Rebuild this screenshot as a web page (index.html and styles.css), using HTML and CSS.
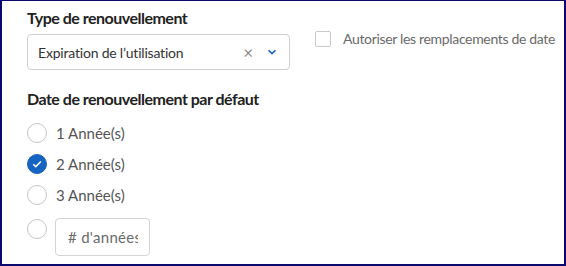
FILE: index.html
```html
<!DOCTYPE html>
<html lang="fr">
<head>
    <meta charset="UTF-8">
    <title>Renouvellement</title>
    <link rel="stylesheet" href="styles.css">
</head>
<body>
    <div class="frame">
        <div class="top-row">
            <div class="field">
                <label class="field-label">Type de renouvellement</label>
                <div class="select">
                    <span class="select-value">Expiration de l’utilisation</span>
                    <span class="select-clear">&times;</span>
                    <svg class="select-arrow" width="10" height="6" viewBox="0 0 10 6">
                        <path d="M1.5 1.2 L5 4.6 L8.5 1.2" fill="none" stroke="#1565c0" stroke-width="1.6"/>
                    </svg>
                </div>
            </div>
            <label class="checkbox">
                <span class="checkbox-box"></span>
                <span class="checkbox-text">Autoriser les remplacements de date</span>
            </label>
        </div>

        <div class="field">
            <div class="field-label">Date de renouvellement par défaut</div>
            <div class="radio-list">
                <label class="radio">
                    <span class="radio-dot"></span>
                    <span>1 Année(s)</span>
                </label>
                <label class="radio checked">
                    <span class="radio-dot">
                        <svg width="10" height="8" viewBox="0 0 10 8">
                            <path d="M1.2 4.2 L3.8 6.6 L8.8 1.4" fill="none" stroke="#fff" stroke-width="1.5"/>
                        </svg>
                    </span>
                    <span>2 Année(s)</span>
                </label>
                <label class="radio">
                    <span class="radio-dot"></span>
                    <span>3 Année(s)</span>
                </label>
                <div class="radio custom">
                    <span class="radio-dot"></span>
                    <input class="years-input" type="text" placeholder="# d'années">
                </div>
            </div>
        </div>
    </div>
</body>
</html>
```

FILE: styles.css
```css
* {
    margin: 0;
    padding: 0;
    box-sizing: border-box;
}
body {
    font-family: 'Lato', sans-serif;
    background-color: #ffffff;
    color: #222222;
}
.frame {
    width: 566px;
    height: 266px;
    border-top: 1px solid #0a0a6e;
    border-left: 2px solid #0a0a6e;
    border-right: 2px solid #0a0a6e;
    border-bottom: 2px solid #0a0a6e;
    padding: 7px 0 0 25px;
}
.top-row {
    display: flex;
    align-items: flex-start;
}
.field-label {
    display: block;
    font-size: 16px;
    font-weight: 700;
    letter-spacing: -0.5px;
    color: #222222;
    line-height: 20px;
    height: 26px;
    white-space: nowrap;
}
.select {
    width: 263px;
    height: 36px;
    border: 1px solid #d0d0d0;
    border-radius: 4px;
    display: flex;
    align-items: center;
    padding: 0 10px;
    font-size: 14px;
    letter-spacing: -0.2px;
    color: #333333;
}
.select-value {
    flex: 1;
}
.select-clear {
    color: #8a8a8a;
    font-size: 17px;
    margin-right: 14px;
}
.select-arrow {
    margin-right: 2px;
}
.checkbox {
    display: flex;
    align-items: center;
    margin: 22px 0 0 25px;
    gap: 12px;
    white-space: nowrap;
}
.checkbox-box {
    width: 16px;
    height: 16px;
    border: 1px solid #c8c8c8;
    border-radius: 2px;
}
.checkbox-text {
    font-size: 14px;
    letter-spacing: -0.33px;
    color: #6a6a6a;
}
.top-row + .field {
    margin-top: 19px;
}
.radio-list {
    display: flex;
    flex-direction: column;
    gap: 11px;
    margin-top: 8px;
}
.radio {
    display: flex;
    align-items: center;
    gap: 9px;
    font-size: 15px;
    color: #555555;
    height: 20px;
}
.radio-dot {
    width: 20px;
    height: 20px;
    flex-shrink: 0;
    border: 1px solid #c4c4c4;
    border-radius: 50%;
    display: flex;
    align-items: center;
    justify-content: center;
}
.radio.checked .radio-dot {
    background-color: #1565c0;
    border-color: #1565c0;
}
.radio.custom {
    height: 38px;
    align-items: flex-start;
    gap: 8px;
    margin-top: 2px;
}
.radio.custom .radio-dot {
    margin-top: 1px;
}
.years-input {
    width: 95px;
    height: 38px;
    border: 1px solid #d4d4d4;
    border-radius: 4px;
    padding: 0 11px 0 12px;
    font-family: 'Lato', sans-serif;
    font-size: 15px;
    letter-spacing: 0.3px;
    color: #333333;
}
.years-input::placeholder {
    color: #6a6a6a;
}
```
